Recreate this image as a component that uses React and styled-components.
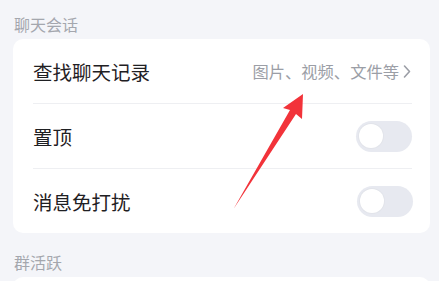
import styled, { createGlobalStyle } from 'styled-components'
import React from 'react'

const GlobalStyle = createGlobalStyle`
  html, body {
    margin: 0;
    padding: 0;
    background: #f4f5f9;
    font-family: "Noto Sans CJK SC", "Noto Sans", sans-serif;
  }
`

const Page = styled.div`
  position: relative;
  width: 439px;
  height: 281px;
  overflow: hidden;
  padding: 0 9px 0 13px;
  box-sizing: border-box;
  background: #f4f5f9;
`
const SectionTitle = styled.div`
  padding: ${p => (p.$first ? '14px' : '19px')} 0 5px 1px;
  font-size: 16px;
  line-height: 20px;
  color: #a4a7ae;
`
const Card = styled.div`
  background: #ffffff;
  border-radius: 10px;
  padding: 0 17px 0 20px;
  min-height: ${p => p.$minHeight || 0}px;
`
const Row = styled.div`
  display: flex;
  align-items: center;
  justify-content: space-between;
  height: 64px;
  border-bottom: ${p => (p.$last ? 'none' : '1px solid #eeeff2')};
  margin-right: ${p => (p.$last ? '0' : '1px')};
`
const Label = styled.span`
  font-size: 19.5px;
  color: #1f2023;
`
const Hint = styled.span`
  display: flex;
  align-items: center;
  gap: 3px;
  font-size: 16.3px;
  color: #9b9ea6;
`
const Toggle = styled.div`
  width: 56px;
  height: 31px;
  border-radius: 16px;
  background: #e7e9f0;
  display: flex;
  align-items: center;
  padding: 0 3px;
  box-sizing: border-box;
`
const Knob = styled.div`
  width: 24px;
  height: 24px;
  border-radius: 50%;
  background: #ffffff;
  box-shadow: 0 0 0 1px #e2e4ea;
`
const Overlay = styled.svg`
  position: absolute;
  left: 0;
  top: 0;
  pointer-events: none;
`

function Chevron() {
  return (
    <svg width="10" height="15" viewBox="0 0 10 15">
      <path d="M2.5 2 L7.5 7.5 L2.5 13" fill="none" stroke="#9b9ea6" strokeWidth="1.6" strokeLinecap="round" strokeLinejoin="round" />
    </svg>
  )
}

export default function App() {
  return (
    <Page>
      <GlobalStyle />
      <SectionTitle $first>聊天会话</SectionTitle>
      <Card>
        <Row>
          <Label>查找聊天记录</Label>
          <Hint>图片、视频、文件等<Chevron /></Hint>
        </Row>
        <Row>
          <Label>置顶</Label>
          <Toggle><Knob /></Toggle>
        </Row>
        <Row $last>
          <Label>消息免打扰</Label>
          <Toggle><Knob /></Toggle>
        </Row>
      </Card>
      <SectionTitle>群活跃</SectionTitle>
      <Card $minHeight={40} />
      <Overlay width="439" height="281" viewBox="0 0 439 281">
        <path d="M303 94 L302 119 L296 114 L233.5 209 L290 110 L283 108 Z" fill="#f2333a" />
      </Overlay>
    </Page>
  )
}
